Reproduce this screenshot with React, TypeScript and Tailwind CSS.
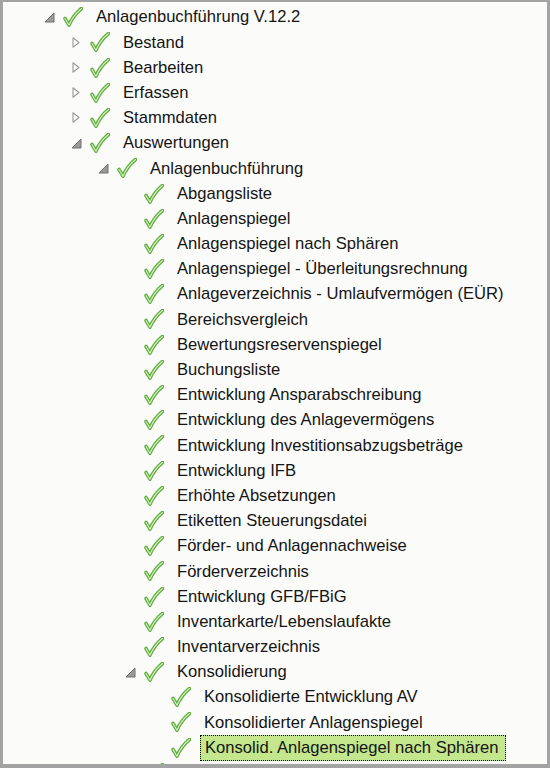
import React from "react";

type Item = { label: string; level: number; toggle?: "open" | "closed"; selected?: boolean };

const items: Item[] = [
  { label: "Anlagenbuchführung V.12.2", level: 0, toggle: "open" },
  { label: "Bestand", level: 1, toggle: "closed" },
  { label: "Bearbeiten", level: 1, toggle: "closed" },
  { label: "Erfassen", level: 1, toggle: "closed" },
  { label: "Stammdaten", level: 1, toggle: "closed" },
  { label: "Auswertungen", level: 1, toggle: "open" },
  { label: "Anlagenbuchführung", level: 2, toggle: "open" },
  { label: "Abgangsliste", level: 3 },
  { label: "Anlagenspiegel", level: 3 },
  { label: "Anlagenspiegel nach Sphären", level: 3 },
  { label: "Anlagenspiegel - Überleitungsrechnung", level: 3 },
  { label: "Anlageverzeichnis - Umlaufvermögen (EÜR)", level: 3 },
  { label: "Bereichsvergleich", level: 3 },
  { label: "Bewertungsreservenspiegel", level: 3 },
  { label: "Buchungsliste", level: 3 },
  { label: "Entwicklung Ansparabschreibung", level: 3 },
  { label: "Entwicklung des Anlagevermögens", level: 3 },
  { label: "Entwicklung Investitionsabzugsbeträge", level: 3 },
  { label: "Entwicklung IFB", level: 3 },
  { label: "Erhöhte Absetzungen", level: 3 },
  { label: "Etiketten Steuerungsdatei", level: 3 },
  { label: "Förder- und Anlagennachweise", level: 3 },
  { label: "Förderverzeichnis", level: 3 },
  { label: "Entwicklung GFB/FBiG", level: 3 },
  { label: "Inventarkarte/Lebenslaufakte", level: 3 },
  { label: "Inventarverzeichnis", level: 3 },
  { label: "Konsolidierung", level: 3, toggle: "open" },
  { label: "Konsolidierte Entwicklung AV", level: 4 },
  { label: "Konsolidierter Anlagenspiegel", level: 4 },
  { label: "Konsolid. Anlagenspiegel nach Sphären", level: 4, selected: true },
  { label: "", level: 3 },
];

function Check() {
  return (
    <svg width="20" height="20" viewBox="0 0 20 20" className="shrink-0">
      <path
        d="M2 11.5 L6 18.2 C8.5 12 12.5 6.5 18.5 1.5"
        fill="none"
        stroke="#5fae3e"
        strokeWidth="3.6"
        strokeLinecap="round"
        strokeLinejoin="round"
      />
      <path
        d="M2 11.5 L6 18.2 C8.5 12 12.5 6.5 18.5 1.5"
        fill="none"
        stroke="#d9f0c2"
        strokeWidth="1.1"
        strokeLinecap="round"
        strokeLinejoin="round"
      />
    </svg>
  );
}

function Toggle({ kind }: { kind?: "open" | "closed" }) {
  return (
    <div className="w-[18px] h-full flex items-center justify-center shrink-0">
      {kind === "open" && (
        <svg width="11" height="11" viewBox="0 0 11 11">
          <path d="M10 1 L10 10 L1 10 Z" fill="#9a9a9a" stroke="#707070" strokeWidth="1" strokeLinejoin="round" />
        </svg>
      )}
      {kind === "closed" && (
        <svg width="8" height="11" viewBox="0 0 8 11">
          <path d="M1 0.8 L7 5.5 L1 10.2 Z" fill="none" stroke="#9a9a9a" strokeWidth="1.1" strokeLinejoin="round" />
        </svg>
      )}
    </div>
  );
}

export default function App() {
  return (
    <div className="w-[550px] h-[768px] overflow-hidden border-l-[3px] border-t-[2px] border-r-[3px] border-b-[4px] border-[#a3a3a3] bg-[#fbfbf9]">
      <div className="pt-[2.6px] flex flex-col">
        {items.map((it, i) => (
          <div
            key={i}
            className="h-[25.2px] flex items-center shrink-0"
            style={{ paddingLeft: 37 + it.level * 27 }}
          >
            <Toggle kind={it.toggle} />
            <div className="ml-[5px]">
              <Check />
            </div>
            <div
              className={
                it.selected
                  ? "ml-[9px] h-[26px] flex items-center pl-[4px] pr-[7px] bg-[#c4e68c] border border-dotted border-black"
                  : "ml-[13px] h-full flex items-center"
              }
            >
              <span className="text-[16.6px] leading-none pt-[1px] text-[#141414] whitespace-nowrap" style={{ fontFamily: '"Liberation Sans", Arial, sans-serif' }}>
                {it.label}
              </span>
            </div>
          </div>
        ))}
      </div>
    </div>
  );
}
